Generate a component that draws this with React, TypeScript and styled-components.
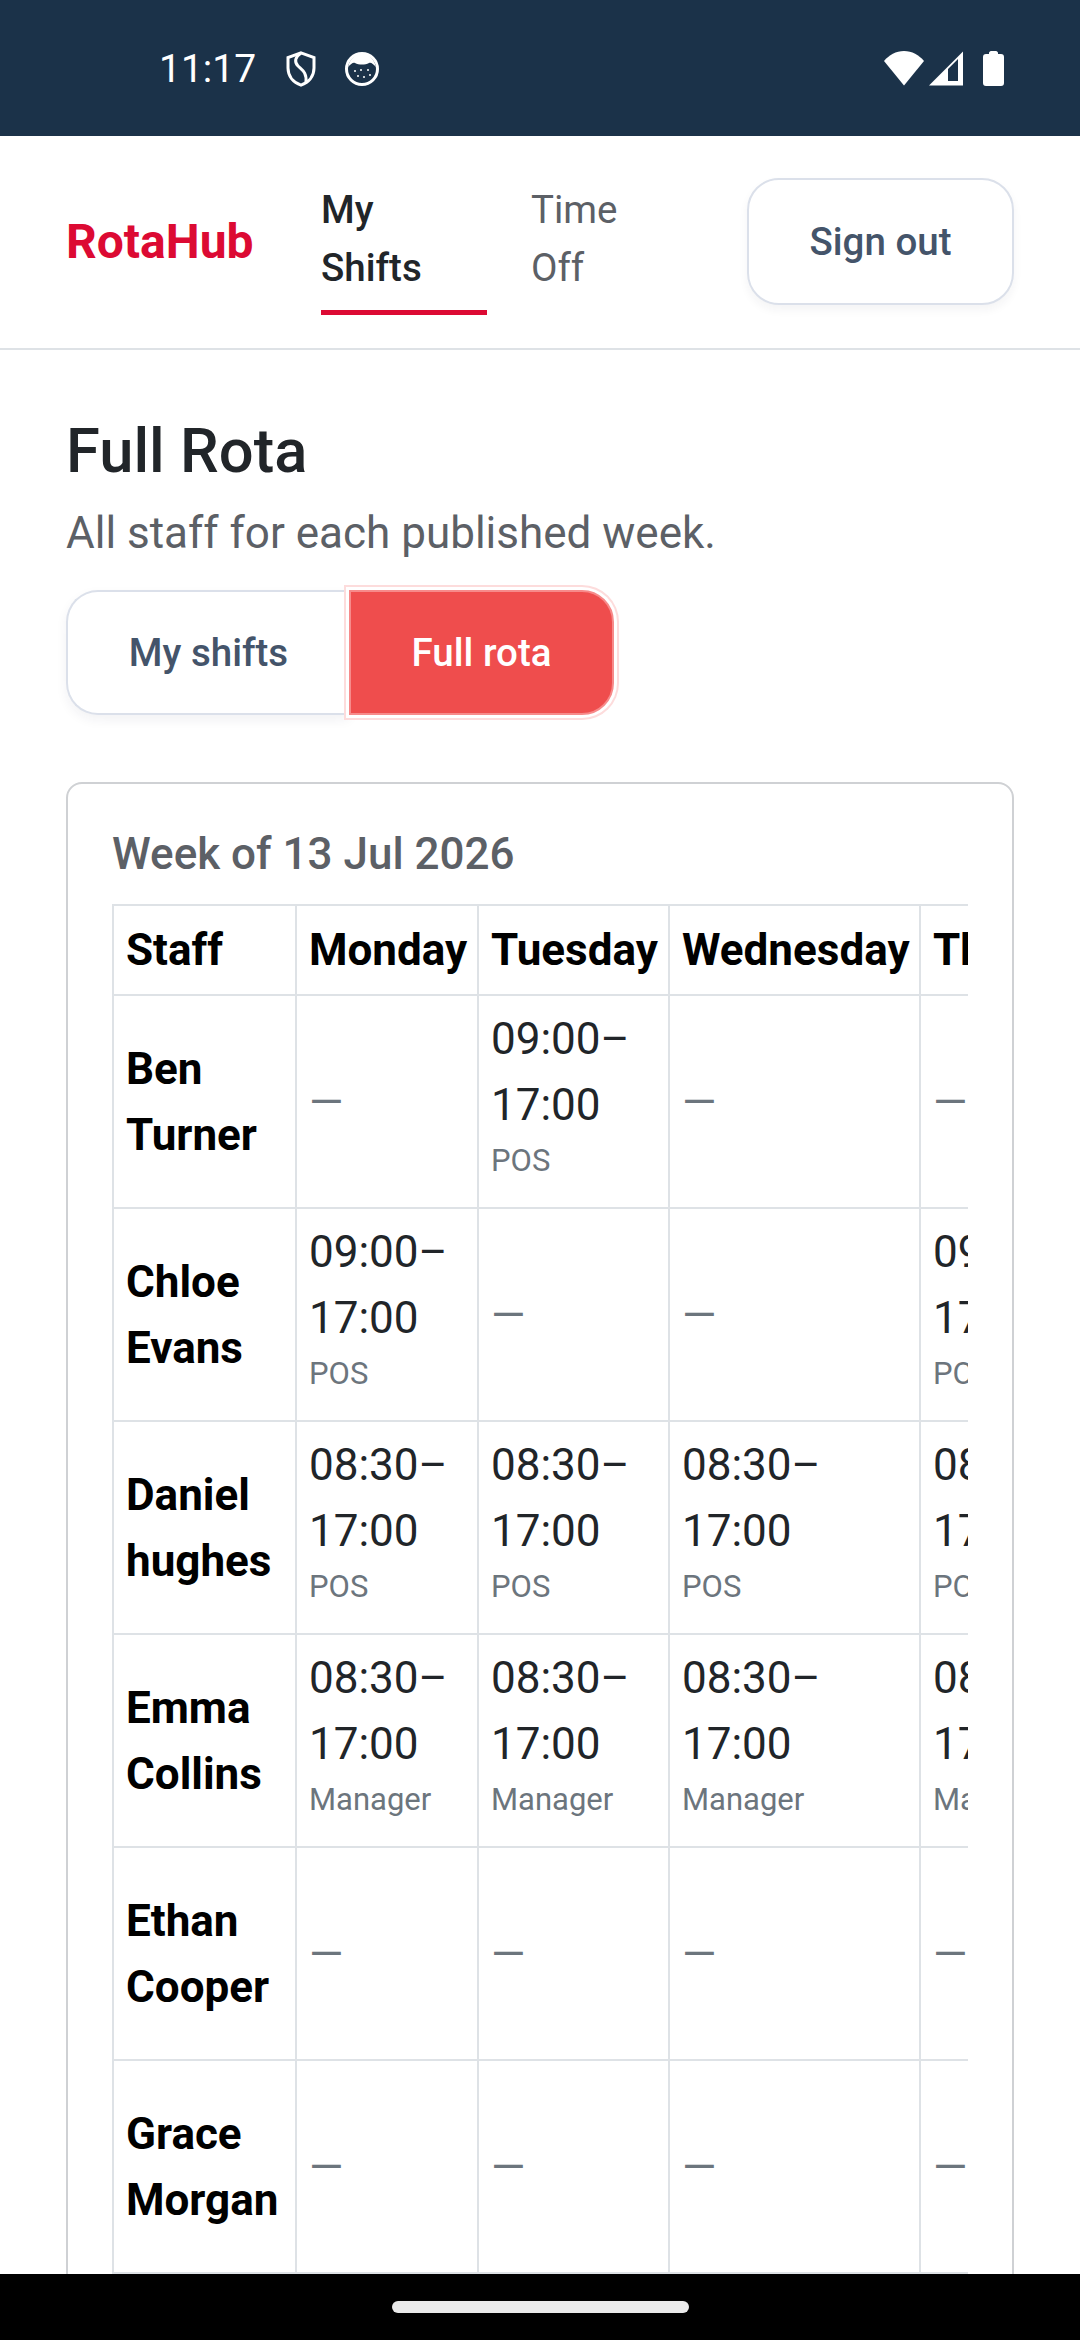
import React from 'react';
import styled, { createGlobalStyle } from 'styled-components';

type Shift = { time: string; role: string } | null;

const days = ['Monday', 'Tuesday', 'Wednesday', 'Thursday'];
const colWidths = [183, 182, 191, 251, 251];

const pos: Shift = { time: '09:00–17:00', role: 'POS' };
const early: Shift = { time: '08:30–17:00', role: 'POS' };
const manager: Shift = { time: '08:30–17:00', role: 'Manager' };

const staff: { name: string; shifts: Shift[] }[] = [
  { name: 'Ben Turner', shifts: [null, pos, null, null] },
  { name: 'Chloe Evans', shifts: [pos, null, null, pos] },
  { name: 'Daniel hughes', shifts: [early, early, early, early] },
  { name: 'Emma Collins', shifts: [manager, manager, manager, manager] },
  { name: 'Ethan Cooper', shifts: [null, null, null, null] },
  { name: 'Grace Morgan', shifts: [null, null, null, null] },
];

const App: React.FC = () => {
  return <>
    <GlobalStyle />
    <Screen>
      <StatusBar>
        <StatusLeft>
          <Clock>11:17</Clock>
          <svg width="30" height="36" viewBox="0 0 30 36" fill="none" stroke="#fff" strokeWidth="3">
            <path d="M15 1.8 L28 6.5 V17 C28 25.5 22.5 31.5 15 34.2 C7.5 31.5 2 25.5 2 17 V6.5 Z" />
            <path d="M15 2 C9 6 8 11 12 15 C16 19 21 21 20 32" />
          </svg>
          <svg width="36" height="34" viewBox="0 0 36 34">
            <circle cx="18" cy="17" r="15.5" fill="none" stroke="#fff" strokeWidth="3" />
            <path d="M4 15 C6 6 12 2 18 2 C24 2 30 6 32 15 C29 12 27 10 25 11 C21 13 15 13 11 11 C9 10 7 12 4 15 Z" fill="#fff" />
            <g fill="#fff">
              <circle cx="11" cy="19" r="1" />
              <circle cx="17" cy="18" r="1" />
              <circle cx="24" cy="18" r="1" />
              <circle cx="14" cy="24" r="1" />
              <circle cx="20" cy="25" r="1" />
              <circle cx="26" cy="23" r="1" />
            </g>
          </svg>
        </StatusLeft>
        <StatusRight>
          <svg width="40" height="35" viewBox="0 0 40 35" fill="#fff">
            <path d="M0 10 C5 4 12 0 20 0 C28 0 35 4 40 10 L20 34.5 Z" />
          </svg>
          <svg width="34" height="35" viewBox="0 0 34 35">
            <path d="M0 34.5 L34 0.5 V34.5 Z M19 18 V30 H29 V8 Z" fill="#fff" fillRule="evenodd" />
          </svg>
          <BatteryGap />
          <svg width="21" height="35" viewBox="0 0 21 35" fill="#fff">
            <path d="M6 2 C6 1 7 0 8 0 H13 C14 0 15 1 15 2 V3 H18 C20 3 21 4 21 6 V32 C21 34 20 35 18 35 H3 C1 35 0 34 0 32 V6 C0 4 1 3 3 3 H6 Z" />
          </svg>
        </StatusRight>
      </StatusBar>

      <Header>
        <Logo>RotaHub</Logo>
        <NavTabs>
          <NavTab $active>My Shifts</NavTab>
          <NavTab>Time Off</NavTab>
        </NavTabs>
        <SignOut>Sign out</SignOut>
      </Header>

      <Main>
        <Title>Full Rota</Title>
        <Subtitle>All staff for each published week.</Subtitle>
        <Toggle>
          <ToggleLeft>My shifts</ToggleLeft>
          <ToggleRight>Full rota</ToggleRight>
        </Toggle>
        <Card>
          <WeekTitle>Week of 13 Jul 2026</WeekTitle>
          <TableScroll>
            <RotaTable>
              <colgroup>
                {colWidths.map((w, i) => <col key={i} width={w} />)}
              </colgroup>
              <thead>
                <tr>
                  <HeadCell>Staff</HeadCell>
                  {days.map(d => <HeadCell key={d}>{d}</HeadCell>)}
                </tr>
              </thead>
              <tbody>
                {staff.map(s => (
                  <tr key={s.name}>
                    <NameCell>{s.name}</NameCell>
                    {s.shifts.map((shift, i) => (
                      <Cell key={i}>
                        {shift ? <>
                          <ShiftTime>{shift.time}</ShiftTime>
                          <Role>{shift.role}</Role>
                        </> : <Empty>—</Empty>}
                      </Cell>
                    ))}
                  </tr>
                ))}
              </tbody>
            </RotaTable>
          </TableScroll>
        </Card>
      </Main>

      <GestureBar>
        <HomePill />
      </GestureBar>
    </Screen>
  </>;
};

export default App;

const GlobalStyle = createGlobalStyle`
  html, body {
    margin: 0;
    padding: 0;
    background: #fff;
    font-family: Roboto, "Liberation Sans", sans-serif;
  }
  * {
    box-sizing: border-box;
  }
`;

const Screen = styled.div`
  width: 1080px;
  height: 2340px;
  display: flex;
  flex-direction: column;
  overflow: hidden;
`;

const StatusBar = styled.div`
  flex: 0 0 136px;
  background: #1b3249;
  display: flex;
  align-items: center;
  justify-content: space-between;
  padding: 2px 76px 0 159px;
`;

const StatusLeft = styled.div`
  display: flex;
  align-items: center;
  gap: 28px;
`;

const Clock = styled.span`
  color: #fff;
  font-size: 39px;
  margin-right: 2px;
`;

const StatusRight = styled.div`
  display: flex;
  align-items: center;
  gap: 5px;
  margin-top: -2px;
`;

const BatteryGap = styled.span`
  width: 10px;
`;

const Header = styled.header`
  flex: 0 0 214px;
  display: flex;
  align-items: center;
  padding: 0 66px 2px;
  border-bottom: 2px solid #dee2e6;
`;

const Logo = styled.div`
  width: 255px;
  font-size: 48px;
  font-weight: 700;
  color: #dc0a33;
  white-space: nowrap;
`;

const NavTabs = styled.nav`
  display: flex;
  gap: 44px;
  width: 426px;
  margin-top: 4px;
`;

const NavTab = styled.a<{ $active?: boolean }>`
  flex: 0 0 166px;
  padding: 10px 44px 13px 0;
  font-size: 38.5px;
  line-height: 58px;
  font-weight: ${p => p.$active ? 500 : 400};
  color: ${p => p.$active ? '#212529' : '#5c6066'};
  border-bottom: 5px solid ${p => p.$active ? '#dc0a33' : 'transparent'};
`;

const SignOut = styled.button`
  width: 267px;
  height: 127px;
  background: #fff;
  border: 2px solid #dbe0ea;
  border-radius: 32px;
  box-shadow: 0 5px 10px rgba(30, 40, 60, 0.05);
  font-family: inherit;
  font-size: 38.5px;
  font-weight: 500;
  color: #44546a;
`;

const Main = styled.main`
  flex: 1;
  min-height: 0;
  overflow: hidden;
  padding: 0 66px;
`;

const Title = styled.h1`
  margin: 64px 0 0;
  font-size: 61.5px;
  line-height: 74px;
  font-weight: 500;
  color: #212529;
`;

const Subtitle = styled.p`
  margin: 16px 0 0;
  font-size: 44px;
  line-height: 58px;
  color: #5c6066;
`;

const Toggle = styled.div`
  display: flex;
  margin-top: 28px;
`;

const ToggleLeft = styled.button`
  width: 283px;
  height: 125px;
  background: #fff;
  border: 2px solid #dbe0ea;
  border-right: none;
  border-radius: 32px 0 0 32px;
  box-shadow: 0 5px 12px rgba(30, 40, 60, 0.06);
  font-family: inherit;
  font-size: 38.5px;
  font-weight: 500;
  color: #44546a;
`;

const ToggleRight = styled.button`
  width: 265px;
  height: 125px;
  background: #ef4d4d;
  border: 2px solid #f78a8a;
  border-radius: 0 32px 32px 0;
  box-shadow: 0 0 0 3px #fff, 0 0 0 5px #fddcdc;
  font-family: inherit;
  font-size: 38.5px;
  font-weight: 500;
  color: #fff;
`;

const Card = styled.section`
  margin-top: 67px;
  height: 1600px;
  padding: 40px 44px;
  border: 2px solid #cfd1d4;
  border-radius: 16px;
`;

const WeekTitle = styled.h2`
  margin: 0;
  font-size: 44px;
  line-height: 60px;
  font-weight: 500;
  color: #5c6066;
`;

const TableScroll = styled.div`
  margin-top: 20px;
  overflow: hidden;
`;

const RotaTable = styled.table`
  table-layout: fixed;
  width: 1058px;
  border-collapse: collapse;
  color: #000;
  font-size: 44px;
  line-height: 66px;
`;

const HeadCell = styled.th`
  height: 90px;
  padding: 0 12px;
  border: 2px solid #dee2e6;
  text-align: left;
  font-weight: 700;
  white-space: nowrap;
`;

const NameCell = styled.td`
  height: 213px;
  padding: 12px;
  border: 2px solid #dee2e6;
  font-weight: 700;
`;

const Cell = styled.td`
  height: 213px;
  padding: 8px 12px;
  border: 2px solid #dee2e6;
  color: #212529;
  white-space: nowrap;
`;

const ShiftTime = styled.div`
  width: 150px;
  white-space: normal;
  line-height: 66px;
`;

const Role = styled.div`
  margin-bottom: 14px;
  font-size: 31px;
  line-height: 46px;
  color: #6c757d;
`;

const Empty = styled.span`
  color: #6c757d;
`;

const GestureBar = styled.div`
  flex: 0 0 66px;
  background: #000;
  display: flex;
  justify-content: center;
  padding-top: 27px;
`;

const HomePill = styled.div`
  width: 297px;
  height: 12px;
  border-radius: 6px;
  background: #eaeaea;
`;
